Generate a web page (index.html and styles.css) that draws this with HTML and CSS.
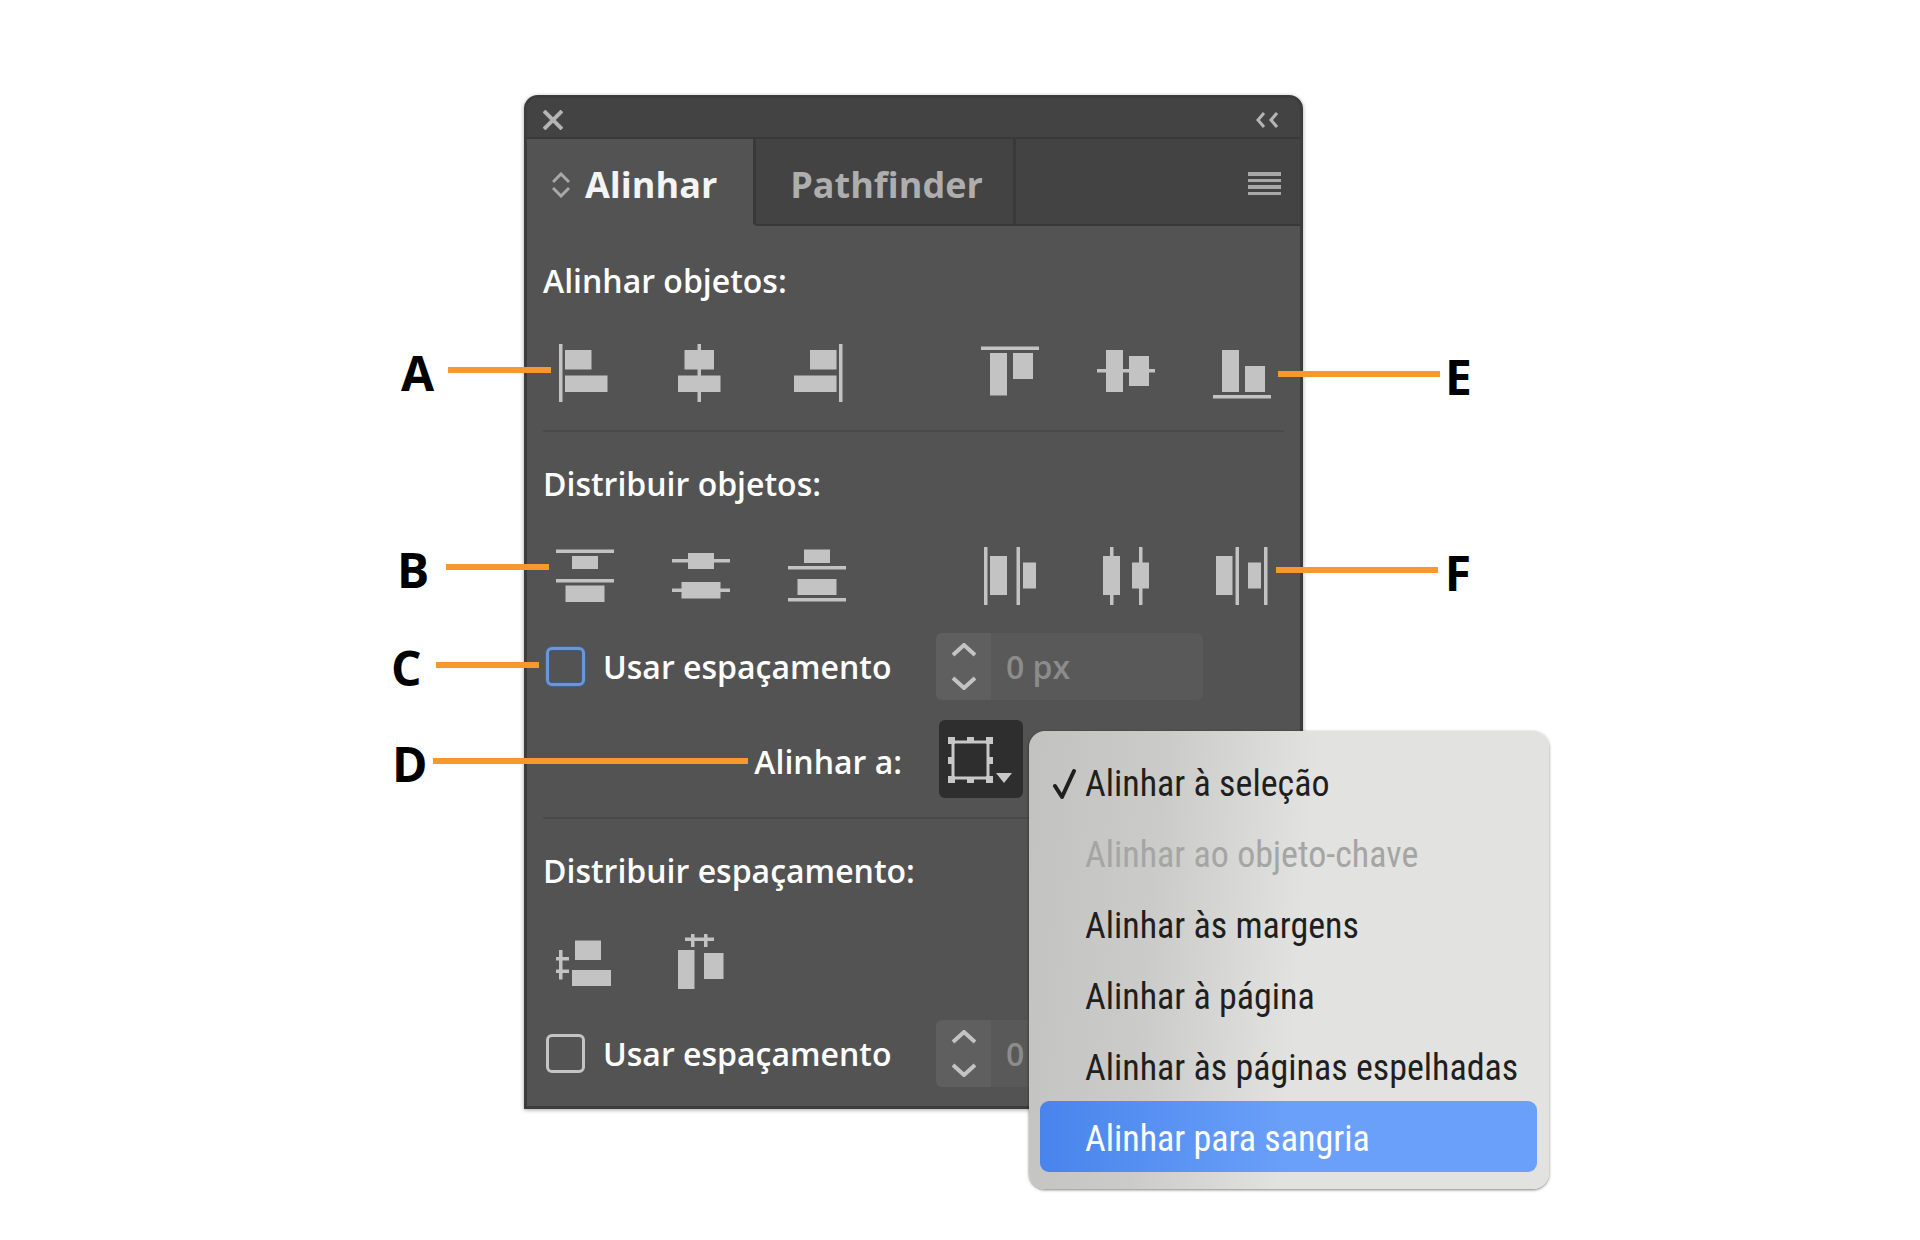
FILE: index.html
```html
<!DOCTYPE html>
<html lang="pt-BR">
<head>
    <meta charset="UTF-8">
    <meta name="viewport" content="width=device-width, initial-scale=1.0">
    <title>Painel Alinhar</title>
    <link rel="stylesheet" href="styles.css">
</head>
<body>
    <main class="figure">
        <div class="panel">
            <header class="titlebar">
                <button type="button" aria-label="Fechar">
                    <svg width="20" height="20" viewBox="0 0 20 20"><path d="M1 1l18 18M19 1L1 19" stroke="#b4b4b4" stroke-width="4"/></svg>
                </button>
                <button type="button" aria-label="Recolher">
                    <svg width="22" height="16" viewBox="0 0 22 16"><path d="M8 1L2 8l6 7M21 1l-6 7 6 7" fill="none" stroke="#b4b4b4" stroke-width="3"/></svg>
                </button>
            </header>

            <nav class="tabs">
                <button type="button" class="tab active">
                    <svg width="18" height="26" viewBox="0 0 18 26"><path d="M1 10l8-8 8 8M1 16l8 8 8-8" fill="none" stroke="#a8a8a8" stroke-width="3"/></svg>
                    Alinhar
                </button>
                <button type="button" class="tab">Pathfinder</button>
                <button type="button" class="tab-menu" aria-label="Menu do painel">
                    <svg width="33" height="24" viewBox="0 0 33 24" fill="#a8a8a8"><path d="M0 0h33v4H0zM0 7h33v3H0zM0 13h33v4H0zM0 20h33v3H0z"/></svg>
                </button>
            </nav>

            <section class="section">
                <h2>Alinhar objetos:</h2>
                <div class="tools">
                    <div class="group">
                        <button type="button" aria-label="Alinhar à esquerda"><svg viewBox="0 0 64 64"><path d="M6 3h3.500v58H6zM12 9h26.500v19.500H12zM12 34.500h42.500V51H12z"/></svg></button>
                        <button type="button" aria-label="Centralizar na horizontal"><svg viewBox="0 0 64 64"><path d="M28.500 3H32v58h-3.500zM15.500 9H45v19.500H15.500zM9 34.500h42.500V51H9z"/></svg></button>
                        <button type="button" aria-label="Alinhar à direita"><svg viewBox="0 0 64 64"><path d="M54 3h3.500v58H54zM25 9h26.500v19.500H25zM9 34.500h42.500V51H9z"/></svg></button>
                    </div>
                    <div class="group">
                        <button type="button" aria-label="Alinhar em cima"><svg viewBox="0 0 64 64"><path d="M3 5.500h58V9H3zM12 12h17v42.500H12zM35 12h20v26H35z"/></svg></button>
                        <button type="button" aria-label="Centralizar na vertical"><svg viewBox="0 0 64 64"><path d="M3 28h58v3.500H3zM12 9h17v42H12zM35 15h20v30H35z"/></svg></button>
                        <button type="button" aria-label="Alinhar embaixo"><svg viewBox="0 0 64 64"><path d="M3 54h58v3.500H3zM12 9h17v42H12zM35 25h20v26H35z"/></svg></button>
                    </div>
                </div>
            </section>

            <section class="section">
                <h2>Distribuir objetos:</h2>
                <div class="tools">
                    <div class="group">
                        <button type="button" aria-label="Distribuir pelo topo"><svg viewBox="0 0 64 64"><path d="M3 5.500h58V9H3zM19 12h26v13H19zM3 35h58v3.500H3zM12.500 41.500h39V58h-39z"/></svg></button>
                        <button type="button" aria-label="Distribuir pelo centro vertical"><svg viewBox="0 0 64 64"><path d="M3 15h58v3.500H3zM19 9h26v16H19zM3 44.500h58V48H3zM12.500 38h39v16.500h-39z"/></svg></button>
                        <button type="button" aria-label="Distribuir pela base"><svg viewBox="0 0 64 64"><path d="M19 5.500h26V19H19zM3 22h58v3.500H3zM12.500 35h39v16h-39zM3 54h58v3.500H3z"/></svg></button>
                    </div>
                    <div class="group">
                        <button type="button" aria-label="Distribuir pela esquerda"><svg viewBox="0 0 64 64"><path d="M6 3h3.500v58H6zM12 12h17v39H12zM38.500 3H42v58h-3.500zM45 18.500h13v26H45z"/></svg></button>
                        <button type="button" aria-label="Distribuir pelo centro horizontal"><svg viewBox="0 0 64 64"><path d="M16 3h3.500v58H16zM9 12h17v39H9zM45 3h3.500v58H45zM38 18.500h17v26H38z"/></svg></button>
                        <button type="button" aria-label="Distribuir pela direita"><svg viewBox="0 0 64 64"><path d="M6 12h16.500v39H6zM25.500 3H29v58h-3.500zM38 18.500h13v26H38zM54 3h3.500v58H54z"/></svg></button>
                    </div>
                </div>

                <div class="row">
                    <label class="check"><input type="checkbox" class="focused"> Usar espaçamento</label>
                    <div class="spinner">
                        <div class="arrows">
                            <button type="button" aria-label="Aumentar"><svg width="26" height="14" viewBox="0 0 26 14"><path d="M2 12L13 2l11 10"/></svg></button>
                            <button type="button" aria-label="Diminuir"><svg width="26" height="14" viewBox="0 0 26 14"><path d="M2 2l11 10L24 2"/></svg></button>
                        </div>
                        <input type="text" value="0 px" aria-label="Espaçamento entre objetos" disabled>
                    </div>
                </div>

                <div class="row align-row">
                    <label class="align-label" for="alignTo">Alinhar a:</label>
                    <div class="align-to">
                        <button type="button" id="alignTo" class="align-button" aria-haspopup="menu">
                            <svg width="66" height="46" viewBox="0 0 66 46" fill="#c8c8c8">
                                <path d="M5 5h35v36H5z" fill="none" stroke="#c8c8c8" stroke-width="3"/>
                                <path d="M0 0h7v7H0zM19 0h7v6h-7zM38 0h7v7h-7zM0 20h5v7H0zM40 20h5v7h-5zM0 39h7v7H0zM19 40h7v6h-7zM38 39h7v7h-7zM48 36h16l-8 10z"/>
                            </svg>
                        </button>
                        <div class="menu" role="menu">
                            <button type="button" role="menuitem">
                                <svg width="24" height="32" viewBox="0 0 24 32"><path d="M2 18l7 11L21 3" fill="none" stroke="#1f1f1f" stroke-width="4" stroke-linecap="round" stroke-linejoin="round"/></svg>
                                Alinhar à seleção
                            </button>
                            <button type="button" role="menuitem" disabled>Alinhar ao objeto-chave</button>
                            <button type="button" role="menuitem">Alinhar às margens</button>
                            <button type="button" role="menuitem">Alinhar à página</button>
                            <button type="button" role="menuitem">Alinhar às páginas espelhadas</button>
                            <button type="button" role="menuitem" class="selected">Alinhar para sangria</button>
                        </div>
                    </div>
                </div>
            </section>

            <section class="section">
                <h2>Distribuir espaçamento:</h2>
                <div class="tools">
                    <div class="group">
                        <button type="button" aria-label="Espaçamento vertical"><svg viewBox="0 0 64 64"><path d="M6 19h3.500v29.500H6zM3 26h13v3.500H3zM3 38.500h13V42H3zM22 9.500h26V29H22zM19 39h39v16H19z"/></svg></button>
                        <button type="button" aria-label="Espaçamento horizontal"><svg viewBox="0 0 64 64"><path d="M16 6.500h29V10H16zM22 3h3.500v13H22zM35 3h3.500v13H35zM9 19h16.500v39H9zM35 22h19.500v26H35z"/></svg></button>
                    </div>
                </div>
                <div class="row">
                    <label class="check"><input type="checkbox"> Usar espaçamento</label>
                    <div class="spinner">
                        <div class="arrows">
                            <button type="button" aria-label="Aumentar"><svg width="26" height="14" viewBox="0 0 26 14"><path d="M2 12L13 2l11 10"/></svg></button>
                            <button type="button" aria-label="Diminuir"><svg width="26" height="14" viewBox="0 0 26 14"><path d="M2 2l11 10L24 2"/></svg></button>
                        </div>
                        <input type="text" value="0 px" aria-label="Espaçamento distribuído" disabled>
                    </div>
                </div>
            </section>
        </div>

        <!-- callouts over the panel -->
        <div class="callout callout-a"><b>A</b><span></span></div>
        <div class="callout callout-b"><b>B</b><span></span></div>
        <div class="callout callout-c"><b>C</b><span></span></div>
        <div class="callout callout-d"><b>D</b><span></span></div>
        <div class="callout callout-e"><span></span><b>E</b></div>
        <div class="callout callout-f"><span></span><b>F</b></div>
    </main>
</body>
</html>
```
FILE: styles.css
```css
* {
    box-sizing: border-box;
}
body {
    min-height: 100vh;
    margin: 0;
    padding: 95px 93px 95px 0;
    background-color: #fff;
    font-family: "Open Sans", "Noto Sans", sans-serif;
}
button {
    padding: 0;
    border: none;
    background: none;
    font-family: inherit;
    cursor: pointer;
}
svg {
    display: block;
}
.figure {
    position: relative;
    max-width: 779px;
    margin: 0 auto;
}
.panel {
    border: 3px solid #3c3c3c;
    border-radius: 14px 14px 0 0;
    background-color: #535353;
    box-shadow: 0 1px 4px rgba(0, 0, 0, 0.35);
    color: #fff;
}
.titlebar {
    display: flex;
    justify-content: space-between;
    align-items: center;
    height: 41px;
    padding: 4px 22px 0 16px;
    background-color: #434343;
    border-bottom: 2px solid #393939;
    border-radius: 11px 11px 0 0;
}
.tabs {
    display: flex;
    height: 87px;
    background-color: #434343;
}
.tab {
    display: flex;
    align-items: center;
    padding: 6px 30px 0 34px;
    border-right: 3px solid #393939;
    border-bottom: 2px solid #393939;
    font-size: 36px;
    font-weight: 700;
    line-height: 48px;
    color: #aeaeae;
}
.tab.active {
    gap: 15px;
    padding: 6px 36px 0 25px;
    background-color: #535353;
    border-bottom-color: #535353;
    color: #f4f4f4;
}
.tab-menu {
    display: flex;
    flex: 1;
    justify-content: flex-end;
    align-items: center;
    padding: 4px 19px 0 0;
    border-bottom: 2px solid #393939;
}
.section {
    padding: 35px 0 25px;
}
.section + .section {
    padding: 0 0 19px;
}
.section + .section::before {
    content: "";
    display: block;
    height: 2px;
    margin: 0 16px 32px;
    background-color: #4a4a4a;
}
h2 {
    margin: 0 16px 40px;
    font-size: 32px;
    font-weight: 600;
    line-height: 40px;
}
.tools {
    display: flex;
    justify-content: space-between;
}
.group {
    display: flex;
}
.group button {
    width: 116px;
    padding: 0 26px;
}
.group svg {
    width: 64px;
    height: 64px;
    fill: #c3c3c3;
}
.row {
    display: grid;
    grid-template-columns: 409px 1fr;
    align-items: center;
    margin-top: 25px;
    font-size: 32px;
    font-weight: 600;
    line-height: 40px;
}
.align-row {
    margin-top: 20px;
}
.check {
    display: flex;
    align-items: center;
    gap: 18px;
    padding-left: 19px;
}
.check input {
    appearance: none;
    width: 39px;
    height: 39px;
    margin: 0;
    border: 3px solid #c4c4c4;
    border-radius: 6px;
}
.check input.focused {
    border-color: #6c97d4;
    box-shadow: inset 0 0 0 1px #38598a, 0 0 0 1px #40608c;
}
.spinner {
    display: flex;
    width: 267px;
    height: 67px;
    border-radius: 6px;
    background-color: #595959;
    overflow: hidden;
}
.arrows {
    display: flex;
    flex-direction: column;
    justify-content: space-between;
    align-items: center;
    width: 55px;
    padding: 10px 0;
    background-color: #5f5f5f;
}
.arrows path {
    fill: none;
    stroke: #c3c3c3;
    stroke-width: 4;
}
.spinner input {
    flex: 1;
    min-width: 0;
    padding: 0 15px;
    border: none;
    background: none;
    font: inherit;
    color: #8c8c8c;
}
.align-label {
    padding: 6px 34px 0 0;
    text-align: right;
}
.align-to {
    position: relative;
    height: 78px;
    margin-left: 3px;
}
.align-button {
    width: 84px;
    height: 78px;
    padding: 1px 9px 0;
    border-radius: 6px;
    background-color: #2e2e2e;
}
.menu {
    position: absolute;
    top: 11px;
    left: 90px;
    z-index: 2;
    width: 520px;
    padding: 15px 12px 17px 11px;
    border-radius: 16px;
    background: linear-gradient(95deg, #c2c2c1 0%, #cbcbc9 25%, #e2e2e0 52%, #e2e2e0 100%);
    box-shadow: 0 1px 3px rgba(0, 0, 0, 0.5);
}
.menu button {
    display: flex;
    align-items: center;
    width: 100%;
    height: 71px;
    padding: 5px 0 0 45px;
    border-radius: 9px;
    font-family: "Roboto Condensed", "Liberation Sans Narrow", Roboto, sans-serif;
    font-size: 36px;
    line-height: 44px;
    white-space: nowrap;
    color: #1f1f1f;
}
.menu svg {
    margin: 0 8px 0 -32px;
}
.menu button:disabled {
    color: #a5a5a4;
}
.menu .selected {
    background: linear-gradient(90deg, #4884ec, #6aa0f9 50%);
    color: #fff;
}
.callout {
    position: absolute;
    display: flex;
    justify-content: space-between;
    align-items: center;
    color: #000;
}
.callout b {
    font-size: 48px;
    font-weight: 700;
    line-height: 48px;
}
.callout span {
    height: 6px;
    margin-bottom: 6px;
    background-color: #f7982f;
}
.callout-a {
    top: 254px;
    left: -123px;
    width: 150px;
}
.callout-b {
    top: 451px;
    left: -127px;
    width: 152px;
}
.callout-c {
    top: 549px;
    left: -133px;
    width: 148px;
}
.callout-d {
    top: 645px;
    left: -132px;
    width: 356px;
}
.callout-e {
    top: 258px;
    left: 754px;
    width: 194px;
}
.callout-f {
    top: 454px;
    left: 752px;
    width: 195px;
}
.callout-a span,
.callout-b span,
.callout-c span {
    width: 103px;
}
.callout-d span {
    width: 315px;
}
.callout-e span,
.callout-f span {
    width: 162px;
}
```
